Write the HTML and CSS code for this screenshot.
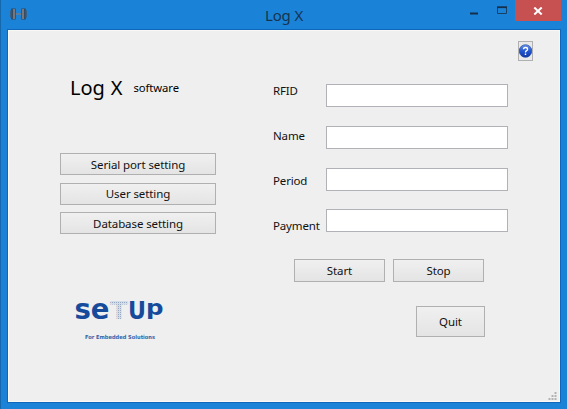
FILE: index.html
```
<!DOCTYPE html>
<html lang="en">
<head>
<meta charset="utf-8">
<title>Log X</title>
<link rel="stylesheet" href="styles.css">
</head>
<body>
<div class="window">
  <header class="titlebar">
    <svg class="app-icon" width="18" height="12" viewBox="0 0 18 12">
      <path d="M5 6h8" stroke="#747b86" stroke-width="1.5"/>
      <path d="M3.500 .5v11M13.500 .5v11" stroke="#30465c" stroke-width="4.500"/>
      <path d="M4 1v10M13 1v10" stroke="#74797f" stroke-width="2.200"/>
      <path d="M1 2.500v7M16 2.500v7" stroke="#44566a" stroke-width="1.500"/>
    </svg>
    <h1 class="title">Log X</h1>
    <div class="controls">
      <svg class="glyphs" width="45" height="21" viewBox="0 0 45 21">
        <path d="M0 13.500h8" stroke="#142f49" stroke-width="2"/>
        <path d="M27.500 7v6.500h9V7" fill="none" stroke="#183f66"/>
        <path d="M27 7.200h10" stroke="#142f49" stroke-width="1.800"/>
      </svg>
      <div class="close">
        <svg width="10" height="8" viewBox="0 0 10 8"><path d="M1.300.5l7.400 7M8.700.5l-7.400 7" stroke="#fff" stroke-width="2"/></svg>
      </div>
    </div>
  </header>
  <main class="client">
    <section class="left">
      <div class="brand"><span class="brand-name">Log X</span><span class="brand-sub">software</span></div>
      <div class="settings">
        <button><span>Serial port setting</span></button>
        <button><span>User setting</span></button>
        <button><span>Database setting</span></button>
      </div>
      <svg class="logo" width="96" height="46" viewBox="0 0 96 46">
        <defs>
          <pattern id="dots" width="2" height="2" patternUnits="userSpaceOnUse">
            <rect width="2" height="2" fill="#d3dde9"/><rect width="1" height="1" fill="#98aac4"/>
          </pattern>
        </defs>
        <g class="logo-word">
          <text x="2.500" y="22.500" textLength="35" lengthAdjust="spacingAndGlyphs">se</text>
          <text class="logo-t" x="38" y="22.500" textLength="18" lengthAdjust="spacingAndGlyphs">T</text>
          <text class="logo-u" x="56" y="22.500" textLength="18" lengthAdjust="spacingAndGlyphs">U</text>
          <text class="logo-p" x="74" y="18.500" textLength="17.500" lengthAdjust="spacingAndGlyphs">p</text>
        </g>
        <text class="logo-tag" x="13" y="42.500" textLength="70" lengthAdjust="spacingAndGlyphs">For Embedded Solutions</text>
      </svg>
    </section>
    <section class="right">
      <button class="help" aria-label="Help">
        <svg width="14" height="16" viewBox="0 0 14 16">
          <defs><linearGradient id="ball" x1="0" y1="0" x2="0" y2="1"><stop offset="0" stop-color="#6c94e4"/><stop offset=".5" stop-color="#2355cf"/><stop offset="1" stop-color="#1038a8"/></linearGradient></defs>
          <circle cx="7" cy="8" r="6.800" fill="url(#ball)" stroke="#1c449f" stroke-width=".7"/>
          <path d="M4.900 6.200Q4.900 4.200 7 4.200Q9.200 4.200 9.200 6Q9.200 7.200 7.900 7.900Q7 8.400 7 9.500M7 10.800v1.600" fill="none" stroke="#fff" stroke-width="1.500"/>
        </svg>
      </button>
      <div class="form">
        <div class="labels">
          <label for="rfid">RFID</label><label for="name">Name</label><label for="period">Period</label><label for="payment">Payment</label>
        </div>
        <div class="fields">
          <input id="rfid"><input id="name"><input id="period"><input id="payment">
        </div>
      </div>
      <div class="actions"><button><span>Start</span></button><button><span>Stop</span></button></div>
      <button class="quit"><span>Quit</span></button>
    </section>
    <svg class="grip" width="9" height="9" viewBox="0 0 9 9" fill="#b3b3b3">
      <path d="M6.500 0h2v2h-2zM3.500 3h2v2h-2zM6.500 3h2v2h-2zM.5 6h2v2h-2zM3.500 6h2v2h-2zM6.500 6h2v2h-2z"/>
    </svg>
  </main>
</div>
</body>
</html>
```
FILE: styles.css
```
* { box-sizing: border-box; }
body { margin: 0; font-family: "Noto Sans", "Open Sans", sans-serif; font-size: 11.500px; color: #111; }
svg { display: block; }
.window { width: 567px; height: 409px; background: #1a83d8; border-left: 1px solid #1668ad; display: flex; flex-direction: column; }
.titlebar { height: 29px; flex: none; display: grid; grid-template-columns: 1fr auto 1fr; }
.app-icon { margin: 8px 0 0 9px; }
.title { margin: 4px 0 0; font-size: 15px; line-height: 22px; font-weight: 400; color: #17344f; letter-spacing: -.15px; }
.controls { display: flex; justify-content: flex-end; padding-right: 6px; }
.close { width: 46px; height: 21px; background: #c75050; display: flex; align-items: center; justify-content: center; }
.client { position: relative; margin: 0 6px 0 6px; height: 374px; border: 1px solid #0e67bb; background: #efefef; box-shadow: inset 0 0 0 1px #f8f8f5; display: flex; }
.left { width: 250px; padding: 45px 0 0 52px; }
.brand { height: 26px; margin-left: 10px; display: flex; align-items: center; white-space: nowrap; color: #000; }
.brand-name { font-size: 20px; line-height: 26px; width: 63.500px; letter-spacing: -.1px; word-spacing: 1px; }
.brand-sub { font-size: 11.300px; line-height: 16px; letter-spacing: -.1px; }
.settings { margin-top: 52px; display: flex; flex-direction: column; gap: 7.500px; width: 156px; }
button { font: inherit; color: #111; padding: 0; border: 1px solid #b0b0b0; border-radius: 0; background: linear-gradient(#f0f0f0, #e4e4e4); height: 22px; display: flex; align-items: center; justify-content: center; line-height: 18px; letter-spacing: -.1px; }
.settings button span { padding-top: 1px; }
.logo { margin: 62px 0 0 12px; overflow: visible; }
.logo-word { font: 700 29px "DejaVu Sans", sans-serif; fill: #164b9c; }
.logo-t, .logo-u { font-size: 24px; }
.logo-p { font-size: 22px; }
.logo-t { fill: url(#dots); }
.logo-tag { font: 700 5.500px "DejaVu Sans", sans-serif; fill: #3564aa; }
.right { flex: 1; display: flex; flex-direction: column; padding-left: 15px; }
.help { width: 15px; height: 20px; margin: 11px 0 0 245px; flex: none; background: #e9e9e9; }
.form { margin-top: 21px; display: flex; }
.labels { width: 53px; display: flex; flex-direction: column; }
.labels label { height: 45px; line-height: 18px; letter-spacing: -.15px; }
.fields { margin-top: 2px; display: flex; flex-direction: column; gap: 18.800px; }
input { width: 182px; height: 23px; padding: 0; border: 1px solid #b1b2b8; background: #fff; }
.actions { margin: -3px 0 0 21px; display: flex; gap: 8px; }
.actions button { width: 91px; height: 23px; }
.quit { width: 69px; height: 31px; margin: 24px 0 0 143px; }
.grip { position: absolute; right: 3px; bottom: 1px; }
```
